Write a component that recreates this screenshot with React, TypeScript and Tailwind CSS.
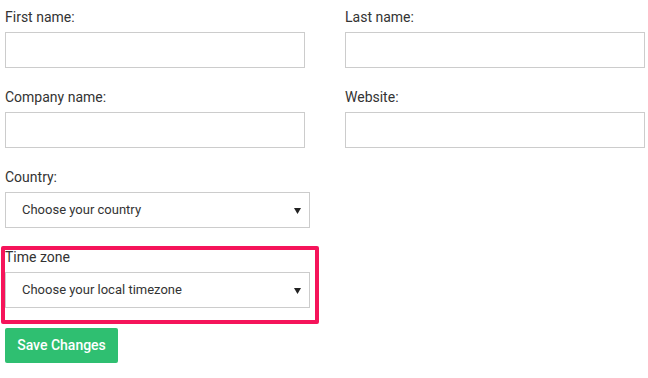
import React from 'react';

const labelCls = "block text-[14px] leading-[20px] text-[#333] mb-[5px]";
const inputCls = "block w-[300px] h-[36px] border border-[#cccccc] bg-white outline-none px-3 text-[13px]";

function Field({ label }: { label: string }) {
  return (
    <div className="mb-[19px]">
      <label className={labelCls}>{label}</label>
      <input type="text" className={inputCls} />
    </div>
  );
}

function SelectBox({ placeholder }: { placeholder: string }) {
  return (
    <div className="relative w-[305px] h-[36px] border border-[#cccccc] bg-white flex items-center">
      <span className="pl-[16px] text-[13px] text-[#333]">{placeholder}</span>
      <svg className="absolute right-[8px] top-[15px]" width="7" height="6" viewBox="0 0 7 6">
        <path d="M0 0 H7 L3.5 6 Z" fill="#222" />
      </svg>
    </div>
  );
}

export default function App() {
  return (
    <div className="min-h-screen bg-white pl-[5px] pt-[7px]" style={{ fontFamily: 'Roboto, "Liberation Sans", sans-serif' }}>
      <div className="grid grid-cols-[300px_300px] gap-x-[40px]">
        <Field label="First name:" />
        <Field label="Last name:" />
        <Field label="Company name:" />
        <Field label="Website:" />
      </div>

      <div className="mb-[19px]">
        <label className={labelCls}>Country:</label>
        <SelectBox placeholder="Choose your country" />
      </div>

      <div className="relative mb-[20px] w-[305px]">
        <span className="absolute left-[-4px] top-[-1px] w-[318px] h-[78px] border-[4px] border-[#f5145a] rounded-[2px] pointer-events-none" />
        <label className={labelCls}>Time zone</label>
        <SelectBox placeholder="Choose your local timezone" />
      </div>

      <button className="w-[113px] h-[35px] bg-[#2fbf71] text-white text-[14px] font-medium rounded-[2px]">
        Save Changes
      </button>
    </div>
  );
}
